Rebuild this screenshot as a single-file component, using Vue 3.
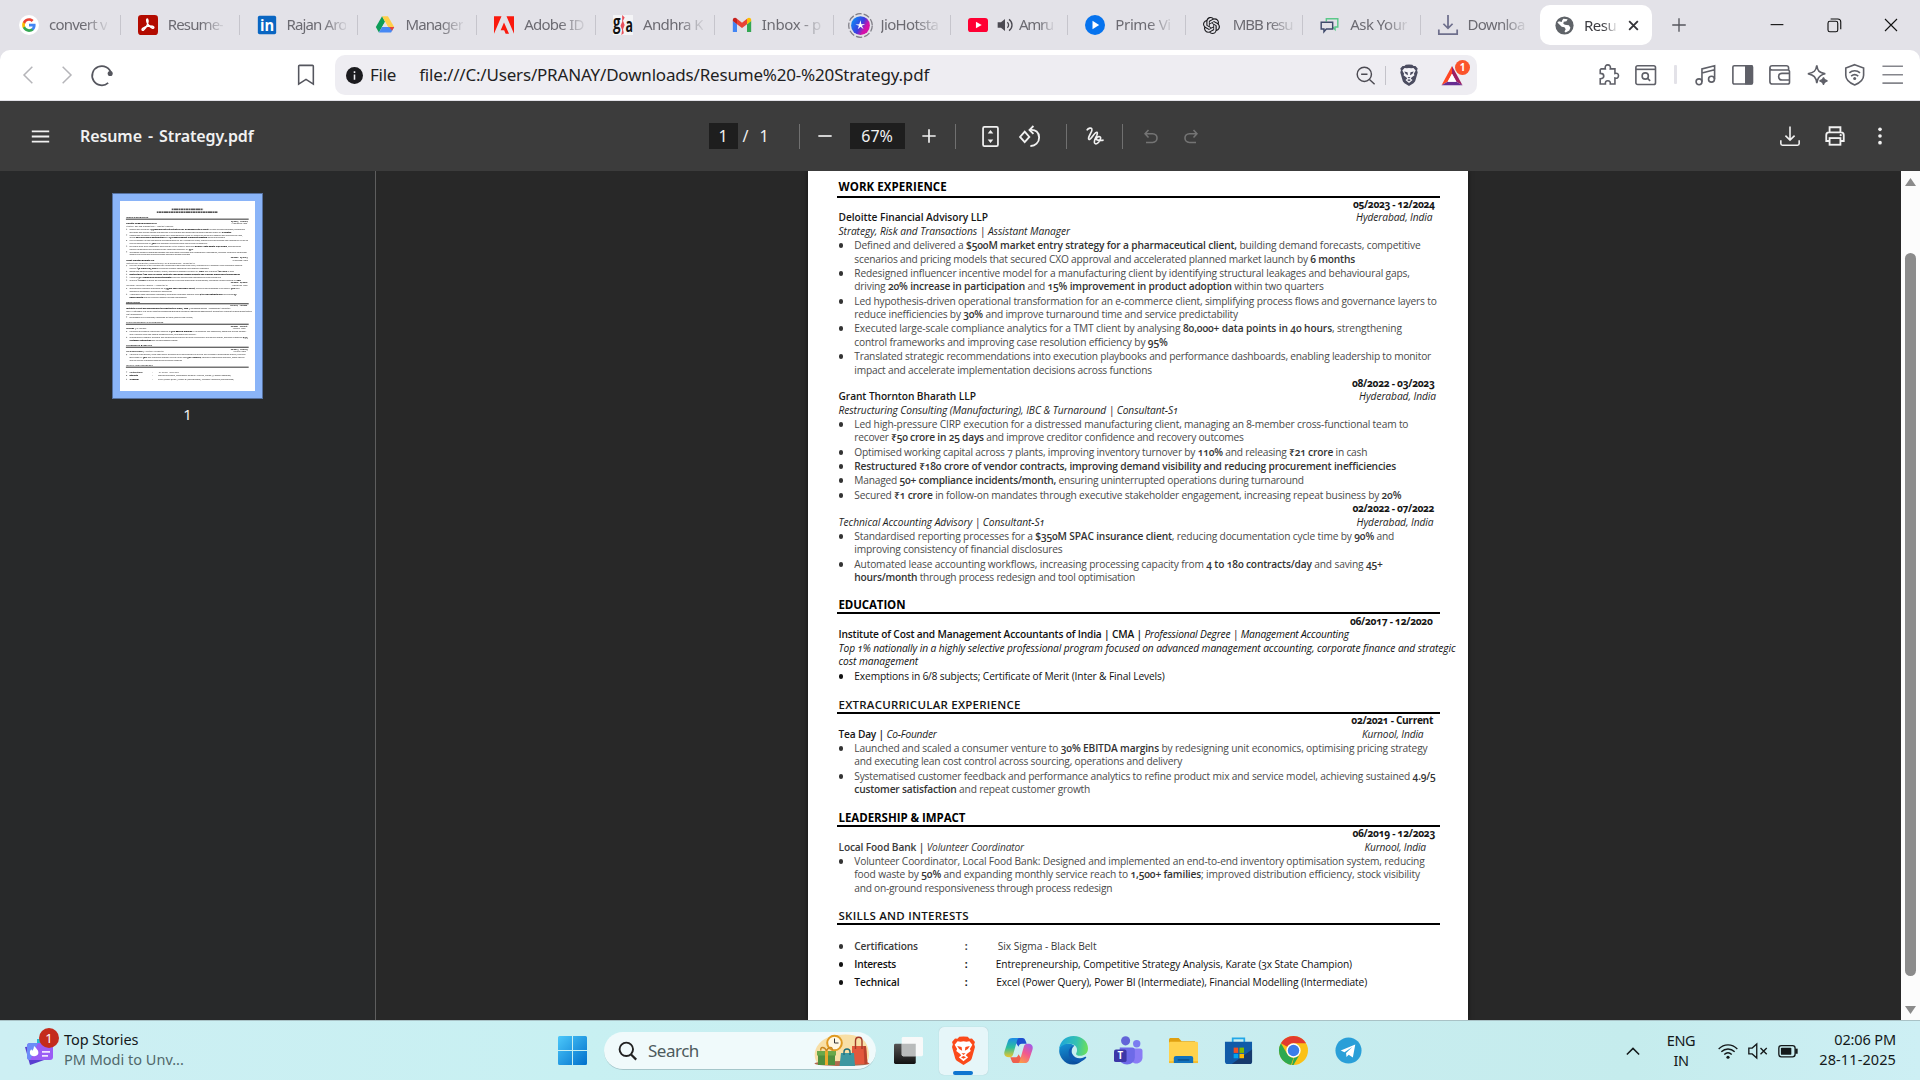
<template>
  <div class="screen">
    <header class="tabstrip">
      <div v-for="tab in tabs" :key="tab.label" class="tab">
        <svg class="ic tab-icon" :class="tab.icon" viewBox="0 0 24 24" v-html="icons[tab.icon]"></svg>
        <svg v-if="tab.audio" class="ic audio" viewBox="0 0 24 24" v-html="icons.audio"></svg>
        <span v-fit="tab.w" class="fit tab-label">{{ tab.label }}</span>
      </div>
      <div class="tab active">
        <svg class="ic tab-icon" viewBox="0 0 24 24" v-html="icons.globe"></svg>
        <span class="tab-title"><span v-fit="32" class="fit tab-label">Resu</span></span>
        <svg class="ic tab-close" viewBox="0 0 24 24" v-html="icons.close"></svg>
      </div>
      <svg class="ic new-tab" viewBox="0 0 24 24" v-html="icons.plus"></svg>
      <div class="window-controls">
        <svg class="ic" viewBox="0 0 24 24"><path d="M3.5 11.5h17" /></svg>
        <svg class="ic" viewBox="0 0 24 24" v-html="icons.restore"></svg>
        <svg class="ic" viewBox="0 0 24 24" v-html="icons.close"></svg>
      </div>
    </header>

    <div class="toolbar-wrap">
      <nav class="toolbar">
        <svg class="ic nav-dim" viewBox="0 0 24 24"><path d="M16 2L6 12l10 10" /></svg>
        <svg class="ic nav-dim forward" viewBox="0 0 24 24"><path d="M8 2l10 10L8 22" /></svg>
        <svg class="ic reload" viewBox="0 0 24 24" v-html="icons.reload"></svg>
        <svg class="ic bookmark" viewBox="0 0 24 24"><path d="M5 1.5h14a1 1 0 0 1 1 1V22l-8-5.2L4 22V2.500a1 1 0 0 1 1-1z" /></svg>
        <div class="urlbar">
          <svg class="ic info" viewBox="0 0 24 24" v-html="icons.info"></svg>
          <span v-fit="26" class="fit">File</span>
          <span v-fit="510" class="fit url">file:///C:/Users/PRANAY/Downloads/Resume%20-%20Strategy.pdf</span>
          <svg class="ic zoom" viewBox="0 0 24 24" v-html="icons.zoomOut"></svg>
          <i class="url-sep"></i>
          <svg class="ic shield" viewBox="0 0 24 24" v-html="icons.lionGrey"></svg>
          <div class="rewards">
            <svg class="ic" viewBox="0 0 24 24" v-html="icons.bat"></svg>
            <b>1</b>
          </div>
        </div>
        <div class="actions">
          <svg class="ic" viewBox="0 0 24 24" v-html="icons.puzzle"></svg>
          <svg class="ic" viewBox="0 0 24 24" v-html="icons.pageSearch"></svg>
          <i class="act-sep"></i>
          <svg v-for="name in actionIcons" :key="name" class="ic" viewBox="0 0 24 24" v-html="icons[name]"></svg>
        </div>
      </nav>
    </div>

    <div class="pdfbar">
      <svg class="ic burger" viewBox="0 0 24 24"><path d="M1 5.500h22M1 12h22M1 18.500h22" /></svg>
      <span v-fit="174" class="fit pdf-title">Resume - Strategy.pdf</span>
      <div class="pdf-tools">
        <span class="box page-box">1</span>
        <span class="slash">/</span>
        <span class="total">1</span>
        <i class="pdf-sep s1"></i>
        <svg class="ic minus" viewBox="0 0 24 24"><path d="M4 12h16" /></svg>
        <span class="box zoom-box"><span v-fit="32" class="fit">67%</span></span>
        <svg class="ic plus" viewBox="0 0 24 24"><path d="M4 12h16M12 4v16" /></svg>
        <i class="pdf-sep s2"></i>
        <svg class="ic fitpage" viewBox="0 0 24 24" v-html="icons.fitPage"></svg>
        <svg class="ic rotate" viewBox="0 0 24 24" v-html="icons.rotate"></svg>
        <i class="pdf-sep s3"></i>
        <svg class="ic draw" viewBox="0 0 24 24" v-html="icons.draw"></svg>
        <i class="pdf-sep s4"></i>
        <svg class="ic undo" viewBox="0 0 24 24" v-html="icons.undo"></svg>
        <svg class="ic redo" viewBox="0 0 24 24" v-html="icons.redo"></svg>
      </div>
      <div class="pdf-right">
        <svg class="ic" viewBox="0 0 24 24" v-html="icons.download"></svg>
        <svg class="ic" viewBox="0 0 24 24" v-html="icons.print"></svg>
        <svg class="ic" viewBox="0 0 24 24" v-html="icons.dots"></svg>
      </div>
    </div>

    <main class="viewer">
      <aside class="sidebar">
        <div class="thumb">
          <div class="thumb-page">
            <div class="thumb-scale" aria-hidden="true">
              <div class="thumb-name"><i></i><i></i></div>
              <div class="sheet">
                <div v-for="(row, i) in rows" :key="i" class="row" :class="row.k" :style="{ height: row.h + 'px' }">
                  <i v-if="row.dot" class="dot"></i>
                  <span v-if="row.t" v-fit="row.w" class="fit txt"><span v-for="(s, j) in parse(row.t)" :key="j" :class="s.c">{{ s.t }}</span></span>
                  <template v-if="row.v"><span class="colon">:</span><span v-fit="row.vw" class="fit val" :style="{ marginLeft: row.vx + 'px' }">{{ row.v }}</span></template>
                  <span v-if="row.r" v-fit="row.rw" class="fit right" :style="{ marginRight: 1468 - row.re + 'px' }">{{ row.r }}</span>
                </div>
              </div>
            </div>
          </div>
        </div>
        <div class="thumb-no">1</div>
      </aside>

      <section class="canvas">
        <article class="page">
          <div class="sheet">
            <div v-for="(row, i) in rows" :key="i" class="row" :class="row.k" :style="{ height: row.h + 'px' }">
              <i v-if="row.dot" class="dot"></i>
              <span v-if="row.t" v-fit="row.w" class="fit txt"><span v-for="(s, j) in parse(row.t)" :key="j" :class="s.c">{{ s.t }}</span></span>
              <template v-if="row.v"><span class="colon">:</span><span v-fit="row.vw" class="fit val" :style="{ marginLeft: row.vx + 'px' }">{{ row.v }}</span></template>
              <span v-if="row.r" v-fit="row.rw" class="fit right" :style="{ marginRight: 1468 - row.re + 'px' }">{{ row.r }}</span>
            </div>
          </div>
        </article>
      </section>

      <div class="scrollbar">
        <svg class="arrow" viewBox="0 0 12 10"><path d="M6 1l5.500 8H.5z" /></svg>
        <i class="handle"></i>
        <svg class="arrow" viewBox="0 0 12 10"><path d="M6 9L.5 1h11z" /></svg>
      </div>
    </main>

    <footer class="taskbar">
      <div class="stories">
        <div class="stories-icon">
          <svg class="ic" viewBox="0 0 28 30" v-html="icons.news"></svg>
          <b>1</b>
        </div>
        <div class="stories-text">
          <span v-fit="74" class="fit">Top Stories</span>
          <span v-fit="120" class="fit sub">PM Modi to Unv...</span>
        </div>
      </div>
      <div class="dock">
        <svg class="ic start" viewBox="0 0 29 29" v-html="icons.start"></svg>
        <div class="search">
          <svg class="ic mag" viewBox="0 0 24 24" v-html="icons.search"></svg>
          <span v-fit="51" class="fit">Search</span>
          <svg class="ic art" viewBox="0 0 58 32" v-html="icons.art"></svg>
        </div>
        <div v-for="app in apps" :key="app" class="app" :class="{ current: app === 'brave' }">
          <svg class="ic" viewBox="0 0 30 30" v-html="icons[app]"></svg>
        </div>
      </div>
      <div class="tray">
        <svg class="ic chevron" viewBox="0 0 24 24"><path d="M1.500 18L12 7.500 22.500 18" /></svg>
        <div class="lang"><span v-fit="29" class="fit">ENG</span><span v-fit="15" class="fit">IN</span></div>
        <svg class="ic" viewBox="0 0 24 24" v-html="icons.wifi"></svg>
        <svg class="ic" viewBox="0 0 24 24" v-html="icons.mute"></svg>
        <svg class="ic" viewBox="0 0 24 24" v-html="icons.battery"></svg>
        <div class="clock"><span v-fit="62" class="fit">02:06 PM</span><span v-fit="77" class="fit">28-11-2025</span></div>
      </div>
    </footer>
  </div>
</template>

<script setup>
// Spreads a run of text over a given width by adjusting its letter spacing
const vFit = {
  mounted(el, { value }) {
    const count = el.textContent.length
    if (count) el.style.letterSpacing = `${(value - el.offsetWidth) / count}px`
  }
}

const tabs = [
  { label: 'convert v', icon: 'google', w: 58 },
  { label: 'Resume-', icon: 'acrobat', w: 56 },
  { label: 'Rajan Aro', icon: 'linkedin', w: 60 },
  { label: 'Manager', icon: 'drive', w: 58 },
  { label: 'Adobe ID', icon: 'adobe', w: 60 },
  { label: 'Andhra K', icon: 'gja', w: 60 },
  { label: 'Inbox - p', icon: 'gmail', w: 59 },
  { label: 'JioHotsta', icon: 'jio', w: 58 },
  { label: 'Amru', icon: 'youtube', audio: true, w: 34 },
  { label: 'Prime Vi', icon: 'prime', w: 55 },
  { label: 'MBB resu', icon: 'openai', w: 60 },
  { label: 'Ask Your', icon: 'chat', w: 57 },
  { label: 'Downloa', icon: 'downloads', w: 57 }
]

const actionIcons = ['music', 'panel', 'wallet', 'sparkle', 'vpn', 'menu']
const apps = ['taskview', 'brave', 'copilot', 'edge', 'teams', 'folder', 'store', 'chrome', 'telegram']

// b is the bottom edge of each line, w its text width; *bold* and _italic_ are inline marks
const lines = [
  { k: 'head strong first', b: 198, t: 'WORK EXPERIENCE', w: 108 },
  { k: 'date', b: 212, r: '05/2023 - 12/2024', re: 1434.5, rw: 82 },
  { k: 'title', b: 225, t: '*Deloitte Financial Advisory LLP*', w: 150, r: 'Hyderabad, India', re: 1432.500, rw: 76.500 },
  { k: 'title', b: 239, t: '_Strategy, Risk and Transactions | Assistant Manager_', w: 232 },
  { dot: 1, b: 253, t: 'Defined and delivered a *$500M market entry strategy for a pharmaceutical client,* building demand forecasts, competitive', w: 566.5 },
  { b: 267, t: 'scenarios and pricing models that secured CXO approval and accelerated planned market launch by *6 months*', w: 501 },
  { dot: 1, b: 281, t: 'Redesigned influencer incentive model for a manufacturing client by identifying structural leakages and behavioural gaps,', w: 555 },
  { b: 294, t: 'driving *20% increase in participation* and *15% improvement in product adoption* within two quarters', w: 469 },
  { dot: 1, b: 309, t: 'Led hypothesis-driven operational transformation for an e-commerce client, simplifying process flows and governance layers to', w: 582 },
  { b: 322, t: 'reduce inefficiencies by *30%* and improve turnaround time and service predictability', w: 383.5 },
  { dot: 1, b: 336, t: 'Executed large-scale compliance analytics for a TMT client by analysing *80,000+ data points in 40 hours*, strengthening', w: 548 },
  { b: 350, t: 'control frameworks and improving case resolution efficiency by *95%*', w: 313 },
  { dot: 1, b: 364, t: 'Translated strategic recommendations into execution playbooks and performance dashboards, enabling leadership to monitor', w: 577 },
  { b: 378, t: 'impact and accelerate implementation decisions across functions', w: 298 },
  { k: 'date', b: 391, r: '08/2022 - 03/2023', re: 1434.5, rw: 83 },
  { k: 'title', b: 404, t: '*Grant Thornton Bharath LLP*', w: 137, r: 'Hyderabad, India', re: 1436, rw: 77 },
  { k: 'title', b: 418, t: '_Restructuring Consulting (Manufacturing), IBC & Turnaround | Consultant-S1_', w: 340 },
  { dot: 1, b: 432, t: 'Led high-pressure CIRP execution for a distressed manufacturing client, managing an 8-member cross-functional team to', w: 554 },
  { b: 445, t: 'recover *₹50 crore in 25 days* and improve creditor confidence and recovery outcomes', w: 389 },
  { dot: 1, b: 460, t: 'Optimised working capital across 7 plants, improving inventory turnover by *110%* and releasing *₹21 crore* in cash', w: 513 },
  { dot: 1, b: 474, t: '*Restructured ₹180 crore of vendor contracts, improving demand visibility and reducing procurement inefficiencies*', w: 542 },
  { dot: 1, b: 488, t: 'Managed *50+ compliance incidents/month,* ensuring uninterrupted operations during turnaround', w: 449 },
  { dot: 1, b: 503, t: 'Secured *₹1 crore* in follow-on mandates through executive stakeholder engagement, increasing repeat business by *20%*', w: 547 },
  { k: 'date', b: 516, r: '02/2022 - 07/2022', re: 1434, rw: 82 },
  { k: 'title', b: 530, t: '_Technical Accounting Advisory | Consultant-S1_', w: 206.5, r: 'Hyderabad, India', re: 1433.500, rw: 77 },
  { dot: 1, b: 544, t: 'Standardised reporting processes for a *$350M SPAC insurance client*, reducing documentation cycle time by *90%* and', w: 540 },
  { b: 557, t: 'improving consistency of financial disclosures', w: 208 },
  { dot: 1, b: 572, t: 'Automated lease accounting workflows, increasing processing capacity from *4 to 180 contracts/day* and saving *45+*', w: 529 },
  { b: 585, t: '*hours/month* through process redesign and tool optimisation', w: 281 },
  { k: 'head strong', b: 614, t: 'EDUCATION', w: 67 },
  { k: 'date', b: 629, r: '06/2017 - 12/2020', re: 1432.500, rw: 83 },
  { k: 'title ink', b: 642, t: '*Institute of Cost and Management Accountants of India | CMA |* _Professional Degree | Management Accounting_', w: 510.5 },
  { k: 'title ink', b: 656, t: '_Top 1% nationally in a highly selective professional program focused on advanced management accounting, corporate finance and strategic_', w: 617 },
  { k: 'title ink', b: 669, t: '_cost management_', w: 80 },
  { k: 'ink', dot: 1, b: 684, t: 'Exemptions in 6/8 subjects; Certificate of Merit (Inter & Final Levels)', w: 310 },
  { k: 'head', b: 714, t: 'EXTRACURRICULAR EXPERIENCE', w: 182 },
  { k: 'date', b: 728, r: '02/2021 - Current', re: 1433, rw: 82 },
  { k: 'title', b: 742, t: '*Tea Day |* _Co-Founder_', w: 98, r: 'Kurnool, India', re: 1423.500, rw: 62 },
  { dot: 1, b: 756, t: 'Launched and scaled a consumer venture to *30% EBITDA margins* by redesigning unit economics, optimising pricing strategy', w: 573.5 },
  { b: 769, t: 'and executing lean cost control across sourcing, operations and delivery', w: 328 },
  { dot: 1, b: 784, t: 'Systematised customer feedback and performance analytics to refine product mix and service model, achieving sustained *4.9/5*', w: 581.5 },
  { b: 797, t: '*customer satisfaction* and repeat customer growth', w: 236 },
  { k: 'head strong', b: 827, t: 'LEADERSHIP & IMPACT', w: 127 },
  { k: 'date', b: 841, r: '06/2019 - 12/2023', re: 1435, rw: 83 },
  { k: 'title soft', b: 855, t: '*Local Food Bank |* _Volunteer Coordinator_', w: 185, r: 'Kurnool, India', re: 1426, rw: 62 },
  { dot: 1, b: 869, t: 'Volunteer Coordinator, Local Food Bank: Designed and implemented an end-to-end inventory optimisation system, reducing', w: 570.5 },
  { b: 882, t: 'food waste by *50%* and expanding monthly service reach to *1,500+ families*; improved distribution efficiency, stock visibility', w: 566 },
  { b: 896, t: 'and on-ground responsiveness through process redesign', w: 258 },
  { k: 'head', b: 925, t: 'SKILLS AND INTERESTS', w: 130 },
  { k: 'skill soft', dot: 1, b: 954, t: '*Certifications*', w: 64, v: 'Six Sigma - Black Belt', vx: 30, vw: 99 },
  { k: 'skill ink', dot: 1, b: 972, t: '*Interests*', w: 42, v: 'Entrepreneurship, Competitive Strategy Analysis, Karate (3x State Champion)', vx: 28, vw: 356 },
  { k: 'skill ink', dot: 1, b: 990, t: '*Technical*', w: 45, v: 'Excel (Power Query), Power BI (Intermediate), Financial Modelling (Intermediate)', vx: 28.5, vw: 371 }
]

const rows = lines.map((line, i) => ({ k: '', ...line, h: line.b - (i ? lines[i - 1].b : 171) }))

const parse = (text) =>
  text
    .split(/(\*[^*]+\*|_[^_]+_)/)
    .filter(Boolean)
    .map((t) => {
      if (t[0] === '*') return { t: t.slice(1, -1), c: 'b' }
      if (t[0] === '_') return { t: t.slice(1, -1), c: 'it' }
      return { t, c: '' }
    })

const lionFace = (body, line) => `<g stroke="none"><path fill="${body}" d="M12 .5l3.500.2 1.500 1.600 2-.2 2.500 2.800-.7 2 .7 2.300-2.600 9.200c-.4 1.300-1 1.800-2 2.500L12 24l-4.900-3.100c-1-.7-1.600-1.200-2-2.500L2.500 9.200l.7-2.300-.7-2L5 2.100l2 .2L8.500.7z"/><path fill="${line}" d="M12 4.300l2.400.4 2.500-.4 2.400 2.900-2 3.500.7 1.700-3.300 2.400-.7 1.400 1.900 1.300L12 20.800l-3.900-3.300L10 16.200l-.7-1.400L6 12.400l.7-1.700-2-3.500 2.400-2.900 2.500.4z"/><path fill="${body}" d="M6.800 8.200l3.600.9.500 3.200-2.500-1.500zM17.200 8.200l-3.600.9-.5 3.200 2.500-1.500zM10.300 14.300h3.400L12 15.700zM9.900 17.500l2.100-.9 2.100.9-2.100 1.400z"/></g>`

const icons = {
  google: '<g stroke="none"><circle cx="12" cy="12" r="12" fill="#fff"/><g transform="translate(3 3) scale(.75)"><path fill="#4285f4" d="M22.560 12.250c0-.78-.07-1.530-.2-2.250H12v4.260h5.920c-.26 1.370-1.040 2.530-2.210 3.310v2.770h3.570c2.080-1.920 3.280-4.740 3.280-8.090z"/><path fill="#34a853" d="M12 23c2.970 0 5.460-.98 7.280-2.660l-3.570-2.770c-.98.66-2.230 1.060-3.710 1.060-2.860 0-5.290-1.930-6.160-4.530H2.180v2.840C3.990 20.530 7.700 23 12 23z"/><path fill="#fbbc05" d="M5.840 14.090c-.22-.66-.35-1.360-.35-2.090s.13-1.430.35-2.090V7.070H2.180C1.430 8.550 1 10.220 1 12s.43 3.450 1.180 4.930l3.660-2.840z"/><path fill="#ea4335" d="M12 5.380c1.620 0 3.060.56 4.210 1.640l3.150-3.150C17.450 2.090 14.970 1 12 1 7.700 1 3.990 3.470 2.180 7.070l3.660 2.840c.87-2.600 3.300-4.530 6.160-4.530z"/></g></g>',
  acrobat: '<rect width="24" height="24" rx="4" fill="#b30b00" stroke="none"/><path stroke="#fff" stroke-width="1.800" d="M11.500 5c2 3-.8 9.500-4.800 13-1.700 1-2.600-.8-1-2 3-2 8.500-3 11.800-2.400 2.500.8 1.500 3-.5 2-3-1.500-6-5-6.500-8.600-.3-2 .5-2.500 1-2z"/>',
  linkedin: '<rect x="1" y="1" width="22" height="22" rx="2" fill="#0a66c2" stroke="none"/><text x="12" y="19.500" font-size="20" font-weight="bold" font-family="Open Sans, sans-serif" text-anchor="middle" textLength="17" lengthAdjust="spacingAndGlyphs" fill="#fff" stroke="none">in</text>',
  drive: '<g stroke="none"><path fill="#0d9d58" d="M8.500 1.500L1 14.500l3.700 6.500L12 8z"/><path fill="#ffcf48" d="M8.500 1.500h7L23 14.500h-7.300z"/><path fill="#4688f4" d="M8.500 14.500H23L19.300 21H4.700z"/><path fill="#ea4335" d="M17 14.500h6L20.500 19z"/><path fill="#e3e2e8" d="M12 8.500l3.500 6h-7z"/></g>',
  adobe: '<path stroke="none" fill="#fa1a0e" d="M0 1.500h9L0 22.500zM15 1.500h9v21zM12 9l6 13.500h-4l-1.800-4.200H8z"/>',
  gja: '<g stroke="none"><rect width="24" height="24" fill="#f4f4f6"/><g font-family="Open Sans, sans-serif" font-weight="bold" font-size="23"><text x="0" y="17" textLength="9" lengthAdjust="spacingAndGlyphs" fill="#111">g</text><text x="15" y="20" textLength="9" lengthAdjust="spacingAndGlyphs" fill="#111">a</text></g><path fill="#e8505b" d="M11 0l3 3-2 4 2 5-2 5 1 5-3 2 1-6-2-5 2-5z"/></g>',
  gmail: '<g stroke="none"><path fill="#4285f4" d="M1 7v13.500h5V11z"/><path fill="#34a853" d="M23 7v13.500h-5V11z"/><path fill="#ea4335" d="M6 4.500l6 4.700 6-4.700V11l-6 4.600L6 11z"/><path fill="#c5221f" d="M1 6c0-2.500 3-3.500 5-1.500V11L1 7.300z"/><path fill="#fbbc04" d="M23 6c0-2.500-3-3.500-5-1.500V11l5-3.700z"/></g>',
  jio: '<defs><linearGradient id="jioFill" x1="0" y1="0.200" x2="1" y2="0.800"><stop offset="0" stop-color="#0b8df5"/><stop offset=".5" stop-color="#3b3de0"/><stop offset=".75" stop-color="#d411a8"/></linearGradient></defs><circle cx="12" cy="12" r="11.300" stroke="#7f7e86" stroke-width="1.200" stroke-dasharray="6 2"/><circle cx="12" cy="12" r="9" fill="url(#jioFill)" stroke="none"/><path stroke="none" fill="#fff" d="M12 7l.8 3.800 3.700-.3-3.200 1.700 1.700 3.300-3-2.200-2.700 2.200 1.200-3.200-3.500-1.300 3.800-.2z"/>',
  youtube: '<rect x="0" y="3.500" width="24" height="17" rx="3.500" fill="#ff0033" stroke="none"/><path fill="#fff" stroke="none" d="M9.500 8l7 4-7 4z"/>',
  audio: '<path fill="#4b4a52" stroke="none" d="M1 8v8h5l6 5V3L6 8z"/><path d="M15.500 8c2.500 2 2.500 6 0 8M18 3.500c6 4 6 13 0 17" stroke-width="2"/>',
  prime: '<circle cx="12" cy="12" r="12" fill="#0673ee" stroke="none"/><path fill="#fff" stroke="none" d="M9 7l8 5-8 5z"/>',
  openai: '<path fill="#17171b" stroke="none" d="M22.2819 9.8211a5.9847 5.9847 0 0 0-.5157-4.9108 6.0462 6.0462 0 0 0-6.5098-2.9A6.0651 6.0651 0 0 0 4.9807 4.1818a5.9847 5.9847 0 0 0-3.9977 2.9 6.0462 6.0462 0 0 0 .7427 7.0966 5.98 5.98 0 0 0 .511 4.9107 6.051 6.051 0 0 0 6.5146 2.9001A5.9847 5.9847 0 0 0 13.2599 24a6.0557 6.0557 0 0 0 5.7718-4.2058 5.9894 5.9894 0 0 0 3.9977-2.9001 6.0557 6.0557 0 0 0-.7475-7.0729zm-9.022 12.6081a4.4755 4.4755 0 0 1-2.8764-1.0408l.1419-.0804 4.7783-2.7582a.7948.7948 0 0 0 .3927-.6813v-6.7369l2.02 1.1686a.071.071 0 0 1 .038.052v5.5826a4.504 4.504 0 0 1-4.4945 4.4944zm-9.6607-4.1254a4.4708 4.4708 0 0 1-.5346-3.0137l.142.0852 4.783 2.7582a.7712.7712 0 0 0 .7806 0l5.8428-3.3685v2.3324a.0804.0804 0 0 1-.0332.0615L9.74 19.9502a4.4992 4.4992 0 0 1-6.1408-1.6464zM2.3408 7.8956a4.485 4.485 0 0 1 2.3655-1.9728V11.6a.7664.7664 0 0 0 .3879.6765l5.8144 3.3543-2.0201 1.1685a.0757.0757 0 0 1-.071 0l-4.8303-2.7865A4.504 4.504 0 0 1 2.3408 7.872zm16.5963 3.8558L13.1038 8.364 15.1192 7.2a.0757.0757 0 0 1 .071 0l4.8303 2.7913a4.4944 4.4944 0 0 1-.6765 8.1042v-5.6772a.79.79 0 0 0-.407-.667zm2.0107-3.0231l-.142-.0852-4.7735-2.7818a.7759.7759 0 0 0-.7854 0L9.409 9.2297V6.8974a.0662.0662 0 0 1 .0284-.0615l4.8303-2.7866a4.4992 4.4992 0 0 1 6.6802 4.66zM8.3065 12.863l-2.02-1.1638a.0804.0804 0 0 1-.038-.0567V6.0742a4.4992 4.4992 0 0 1 7.3757-3.4537l-.142.0805L8.704 5.459a.7948.7948 0 0 0-.3927.6813zm1.0976-2.3654l2.602-1.4998 2.6069 1.4998v2.9994l-2.5974 1.4997-2.6067-1.4997Z"/>',
  chat: '<path stroke="#5bc889" stroke-width="1.800" d="M8 7V3.500h14.500V14H19l0 3-3-3"/><path stroke="#3f4a6b" stroke-width="1.800" d="M1.500 8H16v8.500H8L5 20v-3.500H1.500z"/>',
  downloads: '<path stroke="#6e6f8c" stroke-width="2.100" d="M12 0v15.500M6.500 10.500l5.500 5.500 5.500-5.500M1 17.500V23h22v-5.500"/>',
  globe: '<circle cx="12" cy="12" r="11.500" fill="#5f6368" stroke="none"/><path fill="#fff" stroke="none" d="M10.500 3.500l5.500.7-1.500 2.500-3.500.5-.5 2.500 2 1.500 5 .5 2 3-1.500 3.500-4.500 2.500-1.500-1 1.500-3-1.500-2.500-3.500-.5-5.500-5.500 2-1.500 3.500 1 .5-2z"/>',
  close: '<path d="M4 4l16 16M20 4L4 20"/>',
  plus: '<path d="M12 3v18M3 12h18"/>',
  restore: '<rect x="4" y="7" width="13" height="14" rx="2.500"/><path d="M7.500 4h9.500a4 4 0 0 1 4 4v9.500"/>',
  reload: '<path stroke-width="2" d="M18.500 20.500A11 11 0 1 1 22 10"/><circle cx="20.800" cy="9.800" r="2.900" fill="currentColor" stroke="none"/>',
  info: '<circle cx="12" cy="12" r="12" fill="#1b1b1f" stroke="none"/><path stroke="#eeedf2" stroke-width="2.200" d="M12 10.500V18M12 6v2.400"/>',
  zoomOut: '<circle cx="10.500" cy="10.500" r="9"/><path d="M17 17l6.500 6M6.500 10.500h8"/>',
  lionGrey: lionFace('#4b4c60', '#f4f3f8'),
  brave: '<g transform="scale(1.250)">' + lionFace('#fb4a1b', '#ffffff') + '</g>',
  bat: '<g stroke="none"><path fill="#ff4724" d="M12 1L0 23l7-4 5-9z"/><path fill="#9e1f63" d="M12 1l12 22-7-4-5-9z"/><path fill="#662d91" d="M0 23h24l-7-4H7z"/><path fill="#fff" d="M12 10l5 9H7z"/></g>',
  puzzle: '<path d="M3.500 5.500h4.700C7.500 2.500 9 1 11 1s3.500 1.500 2.800 4.500H19v5c2.500-.7 4 .8 4 2.700s-1.500 3.300-4 2.600V22.500h-5.200c.3-2.500-.9-3.700-2.800-3.700s-3 1.200-2.700 3.700H2.500v-6c3 0 4-1.300 4-3s-1.200-3-4-3v-4z"/>',
  pageSearch: '<rect x="1" y="2" width="22" height="21" rx="2"/><path d="M1 6h22"/><circle cx="11.500" cy="13.500" r="3.500"/><path d="M14.200 16.200l2.800 2.800"/>',
  music: '<circle cx="4.500" cy="20" r="3.300"/><circle cx="18.500" cy="17" r="3.300"/><path d="M7.800 20V5.500L22 2v15M7.800 10L22 6.500"/>',
  panel: '<rect x="1" y="2" width="22" height="20.500" rx="1.500"/><path fill="currentColor" d="M15.500 2H22v20h-6.500z"/>',
  wallet: '<path d="M22 7V4.500C22 3 21 2 19.500 2h-16C2 2 1 3 1 4.500v15C1 21.500 2 22.500 4 22.500h17c1 0 2-.7 2-2V8.500c0-1-.7-1.700-1.700-1.700H4C2 6.800 1 6 1 4.500M23 10.500h-8.500a3.700 3.700 0 0 0 0 7.400H23"/>',
  sparkle: '<path d="M11 1.500c1 6.500 2 7.500 9.500 9.500-4.500 1-6 2-7.500 4.500-1 1.500-1.500 3-2 6-1-7-3-9-10-10.500 7-1.500 9-3 10-9.500z"/><path stroke-width="1.300" fill="currentColor" d="M18.500 15c.5 3 1.500 3.500 4.500 4-3 .5-4 1.500-4.500 4.500-.5-3-1.500-4-4.500-4.500 3-.5 4-1 4.500-4z"/>',
  vpn: '<path d="M12 .8l10 3.700v8c0 5-4 8.500-10 11-6-2.500-10-6-10-11v-8z"/><path stroke-width="1.800" d="M6 10c3.500-3.300 8.500-3.300 12 0M8 13.500c2.500-2 5.500-2 8 0"/><circle cx="12" cy="16.300" r="1.700" fill="currentColor" stroke="none"/>',
  menu: '<path stroke="#85868c" stroke-width="1.800" d="M.5 2.500h23M.5 12h23M.5 21.500h23"/>',
  fitPage: '<rect x="3.500" y="1" width="17" height="22" rx="1.500" stroke-width="2"/><path fill="currentColor" stroke="none" d="M12 4.500l3.200 4H8.800zM12 19.500l-3.200-4h6.400z"/>',
  rotate: '<path stroke-width="2.100" d="M6.500 6.500l5.300 6-5.300 6-5.300-6zM12.500 4.500C19 3.500 23 7.500 23 13c0 6-4.500 10-10 9.800"/><path stroke-width="2.100" d="M16.500 0L12 4.500 16.500 9"/>',
  draw: '<path stroke-width="2.200" d="M1 4.500C3 1.500 7.500 0 8 3.500c.5 3-5.500 9-4.500 12.500 1.500 3.500 6.500-6.500 9.500-8.500 2.500-1.500 2.500 1 1.500 3.500-1.500 3.500-4.500 7.500-3 10.500 2.500 3.500 8-3.500 8-7 0-2.500-4-2-5.500.5-1.500 3 5 3 9.500 2.500"/>',
  undo: '<path stroke-width="2.500" d="M8 1.500L2.500 7.500 8 13.500M3 7.500h11.500c9.500 0 9.500 14 0 14H4"/>',
  redo: '<path stroke-width="2.500" d="M16 1.500l5.500 6-5.500 6M21 7.500H9.500c-9.500 0-9.500 14 0 14H20"/>',
  download: '<path stroke-width="1.900" d="M12 .5V17M6.500 11.500L12 17l5.500-5.500M1 17v4c0 1.200.6 2 2 2h18c1.400 0 2-.8 2-2v-4"/>',
  print: '<path stroke-width="2.200" d="M5.500 7.500v-6h13v6M5.500 18H1.500v-7c0-2 1-3.300 3-3.300h15c2 0 3 1.300 3 3.300v7h-4"/><rect x="5.500" y="14.500" width="13" height="8" stroke-width="2.200"/><circle cx="18.800" cy="11" r="1.300" fill="currentColor" stroke="none"/>',
  dots: '<g fill="currentColor" stroke="none"><circle cx="12" cy="4" r="2.200"/><circle cx="12" cy="12" r="2.200"/><circle cx="12" cy="20" r="2.200"/></g>',
  news: '<g stroke="none"><path fill="#27bcd6" d="M12 4h8v10h-8z"/><path fill="#5a3fd0" d="M0 12l5 18 17-6-4-14z"/><rect x="2" y="8" width="26" height="17" rx="3" fill="#9a5cf5"/><path fill="#6b8cf8" d="M5 8h8L5 25a3 3 0 0 1-3-3V11a3 3 0 0 1 3-3z"/><path fill="#fff" d="M9 11c2 2 5 4.500 4.300 7.500-1 3.500-7.500 3.500-8.300 0-.4-2 .3-3 1.200-4.200l1 1.500C8.500 14.500 8.800 13 9 11z"/><path fill="#efe4ff" d="M17 16h8v1.800h-8zM17 20h6v1.800h-6z"/></g>',
  start: '<defs><linearGradient id="winFill" x1="0" y1="0" x2="1" y2="1"><stop offset="0" stop-color="#4cc8fa"/><stop offset="1" stop-color="#0070cc"/></linearGradient></defs><path fill="url(#winFill)" stroke="none" d="M1.500 0H14v14H0V1.500A1.500 1.500 0 0 1 1.500 0zM15 0h12.500A1.500 1.500 0 0 1 29 1.500V14H15zM0 15h14v14H1.500A1.500 1.500 0 0 1 0 27.500zM15 15h14v12.500a1.500 1.500 0 0 1-1.500 1.500H15z"/>',
  search: '<ellipse cx="10.500" cy="10.500" rx="8.500" ry="8.500" stroke-width="2.400"/><path stroke-width="2.800" d="M16.500 17l6.500 6.500"/>',
  art: '<g stroke="none"><path fill="#f8dfa6" d="M2 24C0 14 8 3 24 1s28 1 31 13-1 17-10 17H10c-5 0-7-3-8-7z"/><ellipse cx="29" cy="29.500" rx="27.500" ry="2.500" fill="#b06a4e"/><rect x="5" y="20" width="17" height="11" fill="#4f8f3f"/><rect x="4" y="17" width="19" height="4.500" fill="#6aa84a"/><path fill="#e9a92d" d="M12 17h3V31h-3z"/><path fill="#e2583c" d="M39 12h14l1.500 18H39z"/><path fill="#b8432d" d="M50.500 12H53l1.500 18h-3z"/><path fill="#3c97a0" d="M28 19h13l1 13H26.500z"/></g><circle cx="21.500" cy="9" r="7.300" fill="#fff8e2" stroke="#e09a22" stroke-width="2"/><path stroke="#333" stroke-width="1" d="M21.500 4.500V9h4"/><path stroke="#c9861d" stroke-width="1.400" d="M13.500 17c-2-5-7-4-5.500-.5M13.500 17c2-5 7-4 5.500-.5"/><path stroke="#a43a28" stroke-width="1.400" d="M42.500 15V7c0-5 6.500-5 6.500 0v8"/><path stroke="#1f6e7b" stroke-width="1.400" d="M31 21v-3c0-4 6-4 6 0v3"/>',
  taskview: '<defs><linearGradient id="tvFill" x1="0" y1="0" x2="0" y2="1"><stop offset="0" stop-color="#555"/><stop offset="1" stop-color="#111"/></linearGradient></defs><g stroke="none"><rect x="0" y="8" width="22.500" height="21" rx="1.500" fill="url(#tvFill)"/><rect x="8" y="1" width="22" height="20" rx="1.500" fill="#f8f9f9"/><path fill="#b9bbbb" d="M8 8h14.500v13H9.500A1.500 1.500 0 0 1 8 19.500z"/></g>',
  copilot: '<defs><linearGradient id="cpA" x1="0" y1="0" x2="0" y2="1"><stop offset="0" stop-color="#1b8ce8"/><stop offset=".5" stop-color="#2bbf9b"/><stop offset="1" stop-color="#f1c52b"/></linearGradient><linearGradient id="cpB" x1="0.800" y1="0" x2="0.300" y2="1"><stop offset="0" stop-color="#a35be8"/><stop offset=".5" stop-color="#f2588e"/><stop offset="1" stop-color="#fb9a4b"/></linearGradient></defs><g stroke="none"><path fill="#1d4fd0" d="M9 2h10c2 0 2.700 1 3.300 3l1.200 3h-5c-2 0-3 1-3.500 3z"/><path fill="url(#cpA)" d="M9 2h7c-1.500 0-2 1.200-2.500 3L9.500 19c-.7 2.200-1.500 3-4 3-4 0-6-2-5-6L4 5.500C4.800 3 6 2 9 2z"/><path fill="#ee5f4d" d="M21 28H11c-2 0-2.700-1-3.300-3L6.500 22h5c2 0 3-1 3.500-3z"/><path fill="url(#cpB)" d="M21 28h-7c1.500 0 2-1.200 2.500-3l4-14c.7-2.200 1.500-3 4-3 4 0 6 2 5 6L26 24.500c-.8 2.500-2 3.500-5 3.500z"/></g>',
  edge: '<defs><linearGradient id="egA" x1="0" y1="0.300" x2="1" y2="0.400"><stop offset="0" stop-color="#1ba5dd"/><stop offset=".6" stop-color="#35c1b1"/><stop offset="1" stop-color="#6bdf5c"/></linearGradient><linearGradient id="egB" x1="0" y1="0" x2="0.400" y2="1"><stop offset="0" stop-color="#1596d8"/><stop offset="1" stop-color="#0b4f9e"/></linearGradient></defs><g stroke="none"><path fill="url(#egB)" d="M1 11c3-4 11-4.500 15-1-4 1-6 5-4 9.500 2 4 7.500 6 14 3.500C21 31 9 32 3.500 24 0 19-.5 15 1 11z"/><path fill="#0f5ab2" d="M10 17c0-4 3-7 6-7-3 2-3.500 6-2 9 2.500 4 7 5.500 13 2.500 1.500-.5 1.500.5.700 1.500C21 30 10 27 10 17z"/><path fill="url(#egA)" d="M0 14C1 5 7 0 15 0c9 0 15 6 15 13 0 5-4 7.500-8 7.500-3.500 0-5-1.500-4-3C20 14 18 8 11 8 6 8 1.500 10 0 14z"/></g>',
  teams: '<g stroke="none"><circle cx="12" cy="5" r="4.700" fill="#6264d8"/><circle cx="23.500" cy="8" r="3.800" fill="#7a7cf0"/><path fill="#8a7cf5" d="M18 13h9c1.700 0 2.500 1 2.500 2.500V22c0 4-3 6.500-6.500 6.500S17 26 17 22z"/><path fill="#6d6ae8" d="M6 12h13c1.700 0 2.500 1 2.500 2.500V22c0 4.500-3.500 7.500-8 7.500S5 26.500 5 22z"/><rect x="0" y="14" width="13" height="13" rx="2" fill="#3c37a8"/></g><text x="6.500" y="24" font-size="10" font-weight="bold" font-family="Open Sans, sans-serif" text-anchor="middle" fill="#fff" stroke="none">T</text>',
  folder: '<g stroke="none"><path fill="#e0a010" d="M0 4c0-1.500.7-2 2-2h8l3 3.500H27V12H0z"/><rect x="0" y="6" width="30" height="22" rx="1.500" fill="#ffd24c"/><path fill="#f6bc2c" d="M0 26h30v2H0z"/><path fill="#1272bd" d="M5 28v-5c0-1.500.8-2.300 2.300-2.300h15.400c1.500 0 2.300.8 2.300 2.300v5z"/><path fill="#0b4f8a" d="M9 24h12v1.500H9z"/></g>',
  store: '<path stroke="#22a7e8" stroke-width="1.800" d="M9 7V2.500h12V7"/><g stroke="none"><path fill="#115ba8" d="M1 6h28v20c0 2-1 3-3 3H4c-2 0-3-1-3-3z"/><path fill="#173a6d" d="M29 14v12c0 2-1 3-3 3H8z"/><path fill="#f25022" d="M10 12h4.700v5.500H10z"/><path fill="#7fba00" d="M16 12h4.700v5.500H16z"/><path fill="#00a4ef" d="M10 18.500h4.700V23H10z"/><path fill="#ffb900" d="M16 18.500h4.700V23H16z"/></g>',
  chrome: '<g stroke="none"><circle cx="15" cy="15" r="15" fill="#fbc116"/><path fill="#e33b2e" d="M15 0c5.500 0 10.400 3 13 7.500H15a7.500 7.500 0 0 0-6.500 3.700L2 7.500C4.600 3 9.500 0 15 0z"/><path fill="#2da94f" d="M2 7.500l6.500 11.200A7.500 7.500 0 0 0 15 22.500h.5L13.500 30A15 15 0 0 1 2 7.500zM15 30l6.500-11.200c-1.500 2.500-4 3.700-6.500 3.700L12.500 29.800z"/><circle cx="15" cy="15" r="7.400" fill="#fff"/><circle cx="15" cy="15" r="5.900" fill="#3b7de9"/></g>',
  telegram: '<circle cx="15" cy="15" r="13.500" fill="#2a9fd8" stroke="none"/><path fill="#fff" stroke="none" d="M7 15l15-6.200-2.500 13.500-4.300-3-2.300 2.400-.4-4.200 6.500-6-8.200 5.200z"/>',
  wifi: '<path d="M.8 9.500c6.500-6.500 16-6.500 22.400 0M4 13c4.700-4.600 11.300-4.600 16 0M7.500 16.300c2.800-2.700 6.200-2.700 9 0"/><circle cx="12" cy="19.500" r="1.900" fill="currentColor" stroke="none"/>',
  mute: '<path d="M1 8.500v7h4l5.500 5V3.500L5 8.500zM15 8.500l7.500 7.500M22.500 8.500L15 16"/>',
  battery: '<rect x="1" y="5.500" width="19.500" height="13.500" rx="3"/><rect x="3.500" y="8" width="12.500" height="8.500" rx="1" fill="currentColor" stroke="none"/><path fill="currentColor" d="M21.500 10h1.300v4.500h-1.300z"/>'
}
</script>

<style>
body {
  margin: 0;
  overflow: hidden;
}
</style>

<style scoped>
.screen {
  width: 1920px;
  height: 1080px;
  display: flex;
  flex-direction: column;
  overflow: hidden;
  font-family: 'Noto Sans', 'Open Sans', sans-serif;
  background: #282828;
}

.ic {
  display: block;
  flex: none;
  fill: none;
  stroke: currentColor;
  stroke-width: 1.8;
  overflow: visible;
}

.fit {
  display: inline-block;
  flex: none;
  white-space: pre;
}

/* tab strip */
.tabstrip {
  height: 50px;
  display: flex;
  align-items: center;
  padding-left: 2px;
  box-sizing: border-box;
  background: #e3e2e8;
}

.tab {
  width: 118.8px;
  height: 20px;
  flex: none;
  display: flex;
  align-items: center;
  padding-left: 17px;
  box-sizing: border-box;
  border-right: 1px solid #c6c5cc;
}

.tab:nth-child(n + 8) {
  width: 117.4px;
}

.tab:nth-child(13) {
  border-color: transparent;
}

.tab-icon {
  width: 20px;
  height: 20px;
  margin-right: 10px;
}

.tab-icon.jio {
  width: 25px;
  height: 25px;
  margin: 0 8px 0 -3px;
}

.tab-icon.openai {
  width: 17px;
  height: 17px;
  margin-right: 13px;
}

.tab-icon.chat {
  width: 19px;
  height: 19px;
  margin-right: 11px;
}

.audio {
  width: 16px;
  height: 16px;
  margin: 0 6px 0 -1px;
  color: #4b4a52;
}

.tab-label {
  padding-bottom: 2px;
  font-size: 15px;
  line-height: 20px;
  color: #6c6b72;
  -webkit-mask-image: linear-gradient(90deg, #000 60%, rgba(0, 0, 0, 0.15));
  mask-image: linear-gradient(90deg, #000 60%, rgba(0, 0, 0, 0.15));
}

.tab.active {
  width: 112px;
  height: 40px;
  margin-left: 2px;
  padding-left: 15px;
  border: 0;
  border-radius: 10px;
  background: #fff;
}

.tab.active .tab-icon {
  width: 19px;
  height: 19px;
}

.tab-title {
  flex: none;
  width: 32px;
  margin-right: 11px;
}

.tab.active .tab-label {
  color: #3d3d42;
}

.tab-close {
  width: 13px;
  height: 13px;
  stroke-width: 3.4;
  color: #333338;
}

.new-tab {
  width: 18px;
  height: 18px;
  margin-left: 18px;
  color: #55555c;
}

.window-controls {
  margin-left: auto;
  margin-right: 20px;
  display: flex;
  gap: 39px;
  color: #111;
}

.window-controls .ic {
  width: 18px;
  height: 18px;
  stroke-width: 1.5;
}

/* address toolbar */
.toolbar-wrap {
  height: 51px;
  background: #e3e2e8;
}

.toolbar {
  height: 50px;
  display: flex;
  align-items: center;
  background: #fff;
  border-radius: 10px 10px 0 0;
  color: #55565e;
}

.nav-dim {
  width: 20px;
  height: 20px;
  margin-left: 19px;
  color: #b5b5b9;
}

.nav-dim.forward {
  margin-left: 17px;
}

.reload {
  width: 21px;
  height: 21px;
  margin-left: 16px;
}

.bookmark {
  width: 22px;
  height: 22px;
  margin-left: 182px;
  stroke-width: 1.7;
}

.urlbar {
  width: 1142px;
  height: 40px;
  margin-left: 18px;
  display: flex;
  align-items: center;
  box-sizing: border-box;
  padding-left: 11px;
  border-radius: 10px;
  background: #eeedf2;
  font-size: 17px;
  color: #1f1f23;
}

.urlbar .fit {
  padding-bottom: 2px;
}

.info {
  width: 17px;
  height: 17px;
  margin-right: 7px;
}

.url {
  margin-left: 23px;
}

.zoom {
  width: 19px;
  height: 19px;
  margin-left: 427px;
  color: #4b4a52;
}

.url-sep {
  width: 1px;
  height: 19px;
  margin: 0 11px 0 10px;
  background: #c4c3ca;
}

.shield {
  width: 24px;
  height: 22px;
}

.rewards {
  position: relative;
  margin-left: 20px;
}

.rewards .ic {
  width: 22px;
  height: 21px;
}

.rewards b {
  position: absolute;
  left: 14px;
  top: -5px;
  width: 15px;
  height: 15px;
  border-radius: 8px;
  background: #fb542b;
  color: #fff;
  font-size: 10px;
  line-height: 15px;
  text-align: center;
}

.actions {
  display: flex;
  align-items: center;
  gap: 16px;
  margin-left: auto;
  margin-right: 17px;
  color: #5f6068;
}

.actions .ic {
  width: 21.4px;
  height: 21.4px;
}

.act-sep {
  width: 3px;
  height: 19px;
  margin: 0 2px 0 1px;
  border-radius: 1px;
  background: #e3e2e8;
}

/* pdf toolbar */
.pdfbar {
  height: 70px;
  flex: none;
  display: flex;
  align-items: center;
  background: #3c3c3c;
  color: #f1f1f1;
}

.burger {
  width: 19px;
  height: 19px;
  margin-left: 31px;
  stroke-width: 2.4;
}

.pdf-title {
  margin-left: 30px;
  font-size: 16px;
  font-weight: 650;
  word-spacing: 2px;
}

.pdf-tools {
  display: flex;
  align-items: center;
  margin-left: 455px;
  font-size: 16px;
}

.box {
  height: 26px;
  line-height: 26px;
  text-align: center;
  background: #1e1e1e;
}

.page-box {
  width: 29px;
}

.slash {
  width: 9px;
  margin-left: 5px;
}

.total {
  width: 12px;
  margin-left: 8px;
}

.pdf-sep {
  width: 1px;
  height: 25px;
  background: #707070;
}

.s1 {
  margin-left: 27px;
}

.minus {
  width: 20px;
  height: 20px;
  margin-left: 15px;
  stroke-width: 2;
}

.zoom-box {
  width: 55px;
  margin-left: 15px;
}

.pdf-tools .plus {
  width: 20px;
  height: 20px;
  margin-left: 14px;
  stroke-width: 2;
}

.s2 {
  margin-left: 16px;
}

.fitpage {
  width: 21px;
  height: 21px;
  margin-left: 24px;
}

.rotate {
  width: 21px;
  height: 21px;
  margin-left: 18px;
}

.s3 {
  margin-left: 26px;
}

.draw {
  width: 18px;
  height: 18px;
  margin-left: 19px;
}

.s4 {
  margin-left: 18px;
}

.undo,
.redo {
  width: 16px;
  height: 15px;
  margin-left: 20px;
  color: #747474;
}

.redo {
  margin-left: 24px;
}

.pdf-right {
  display: flex;
  align-items: center;
  gap: 25px;
  margin-left: auto;
  margin-right: 30px;
}

.pdf-right .ic {
  width: 20px;
  height: 20px;
}

/* viewer */
.viewer {
  height: 849px;
  flex: none;
  display: flex;
  overflow: hidden;
}

.sidebar {
  width: 375px;
  display: flex;
  flex-direction: column;
  align-items: center;
  background: #28292a;
  border-right: 1px solid #5e5e5e;
}

.thumb {
  margin-top: 22px;
  padding: 7px;
  border: 1px solid #56719f;
  background: #8ab4f8;
}

.thumb-page {
  width: 135px;
  height: 190px;
  overflow: hidden;
  background: #fff;
}

.thumb-scale {
  width: 660px;
  transform: scale(0.2036);
  transform-origin: 0 0;
}

.thumb-name {
  height: 64px;
  display: flex;
  flex-direction: column;
  align-items: center;
  justify-content: flex-end;
  gap: 6px;
  box-sizing: border-box;
  padding-bottom: 5px;
}

.thumb-name i {
  width: 155px;
  height: 8px;
  background: repeating-linear-gradient(90deg, #555 0 8px, #999 8px 12px);
}

.thumb-name i + i {
  width: 300px;
}

.thumb-no {
  margin-top: 5px;
  font-size: 15px;
  line-height: 20px;
  color: #f1f1f1;
}

.canvas {
  width: 1525px;
  display: flex;
  background: #282828;
}

.page {
  width: 660px;
  margin-left: 432px;
  background: #fff;
  box-shadow: 0 0 5px rgba(0, 0, 0, 0.55);
}

/* resume sheet */
.sheet {
  width: 660px;
  font-family: 'Open Sans', 'Noto Sans', sans-serif;
  font-size: 10.2px;
  line-height: 14px;
  font-variant-numeric: oldstyle-nums;
  color: #4a4a4a;
}

.row {
  display: flex;
  align-items: flex-end;
  box-sizing: border-box;
  padding: 0 0 1px 46.3px;
}

.row .b {
  font-weight: 640;
  color: #333;
}

.row .it {
  font-style: italic;
}

.dot {
  flex: none;
  width: 4.4px;
  height: 4.4px;
  margin: 0 11.1px 4.2px -15.5px;
  border-radius: 50%;
  background: #333;
}

.row.title,
.row.date {
  padding-left: 30.5px;
  color: #1e1e1e;
}

.row.title .b {
  color: #161616;
}

.row.soft,
.row.soft .txt .b {
  color: #3a3a3a;
}

.row.ink,
.row.ink .b {
  color: #101010;
}

.row.ink .dot {
  background: #111;
}

.right {
  margin-left: auto;
  font-style: italic;
  color: #1e1e1e;
}

.date .right {
  font-style: normal;
  font-weight: 670;
  color: #161616;
}

.row.head {
  width: 603px;
  margin-left: 29px;
  padding: 0 0 0 1.5px;
  border-bottom: 2px solid #000;
  font-size: 11.5px;
  font-weight: 620;
  color: #141414;
}

.row.head.first {
  padding-bottom: 2px;
}

.row.head.strong {
  font-weight: 670;
  color: #000;
}

.row.skill {
  display: grid;
  grid-template-columns: 4.4px 121.600px 3px 1fr;
  align-items: end;
  padding-left: 30.8px;
}

.skill .dot {
  margin-left: 0;
  margin-right: 0;
}

.skill .txt {
  justify-self: start;
  margin-left: 11.1px;
}

.skill .colon {
  font-weight: 700;
}

.skill .val {
  justify-self: start;
}

/* the small preview needs heavier strokes to stay visible */
.thumb-scale .sheet {
  font-weight: 500;
  color: #222;
}

.thumb-scale .row.head {
  border-bottom-width: 4px;
}

.thumb-scale .row .b {
  font-weight: 800;
  color: #000;
}

.scrollbar {
  width: 19px;
  display: flex;
  flex-direction: column;
  align-items: center;
  box-sizing: border-box;
  padding: 6px 0 5px;
  background: #fcfcfc;
}

.arrow {
  width: 13px;
  height: 10px;
  fill: #8b8b8b;
}

.handle {
  width: 11px;
  height: 723px;
  margin-top: 66px;
  margin-bottom: auto;
  border-radius: 6px;
  background: #8b8b8b;
}

/* taskbar */
.taskbar {
  height: 60px;
  flex: none;
  display: flex;
  align-items: center;
  box-sizing: border-box;
  border-top: 1px solid #a9c2c6;
  background: linear-gradient(90deg, #cdeff3 0%, #c8f0f2 30%, #c9edf0 60%, #c5eced 85%, #cdeff4 100%);
  color: #14191a;
}

.stories {
  width: 558px;
  display: flex;
  align-items: center;
}

.stories-icon {
  position: relative;
  margin: -2px 0 0 25px;
}

.stories-icon .ic {
  width: 28px;
  height: 30px;
}

.stories-icon b {
  position: absolute;
  left: 14px;
  top: -7px;
  width: 20px;
  height: 20px;
  border-radius: 50%;
  background: #c42b1c;
  color: #fff;
  font-size: 13px;
  font-weight: 400;
  line-height: 20px;
  text-align: center;
}

.stories-text {
  display: flex;
  flex-direction: column;
  align-items: flex-start;
  margin-left: 11px;
  padding-bottom: 4px;
  font-size: 14.5px;
  line-height: 20px;
}

.stories-text .sub {
  color: #51686b;
}

.dock {
  display: flex;
  align-items: center;
}

.start {
  width: 29px;
  height: 29px;
}

.search {
  width: 272px;
  height: 38px;
  margin: 0 5px 0 17px;
  display: flex;
  align-items: center;
  box-sizing: border-box;
  padding: 0 5px 0 14px;
  border-radius: 19px;
  background: #f0fafb;
  border-bottom: 1px solid #a5c6ca;
  font-size: 17px;
  color: #4d5b5d;
}

.mag {
  width: 19px;
  height: 19px;
  margin-right: 11px;
  color: #222;
}

.art {
  width: 58px;
  height: 32px;
  margin-left: auto;
}

.app {
  width: 49px;
  height: 48px;
  margin: 0 3px;
  display: flex;
  align-items: center;
  justify-content: center;
  position: relative;
  border-radius: 5px;
}

.app .ic {
  width: 29px;
  height: 29px;
}

.app.current {
  background: #e6f6f9;
  box-shadow: 0 0 1px #9fbcc0;
}

.app.current::after {
  content: '';
  position: absolute;
  left: 14px;
  bottom: 0;
  width: 20px;
  height: 4px;
  border-radius: 2px;
  background: #0f75d0;
}

.tray {
  margin-left: auto;
  margin-right: 24px;
  display: flex;
  align-items: center;
  font-size: 14.5px;
  line-height: 20px;
}

.tray .ic {
  width: 20px;
  height: 20px;
  margin-right: 10px;
  stroke-width: 1.6;
}

.tray .chevron {
  width: 14px;
  height: 14px;
  margin-right: 26px;
  stroke-width: 2.6;
}

.lang {
  display: flex;
  flex-direction: column;
  align-items: center;
  width: 30px;
  margin-right: 22px;
  padding-bottom: 2px;
}

.clock {
  width: 77px;
  margin-left: 11px;
  padding-bottom: 4px;
  display: flex;
  flex-direction: column;
  align-items: flex-end;
}
</style>
